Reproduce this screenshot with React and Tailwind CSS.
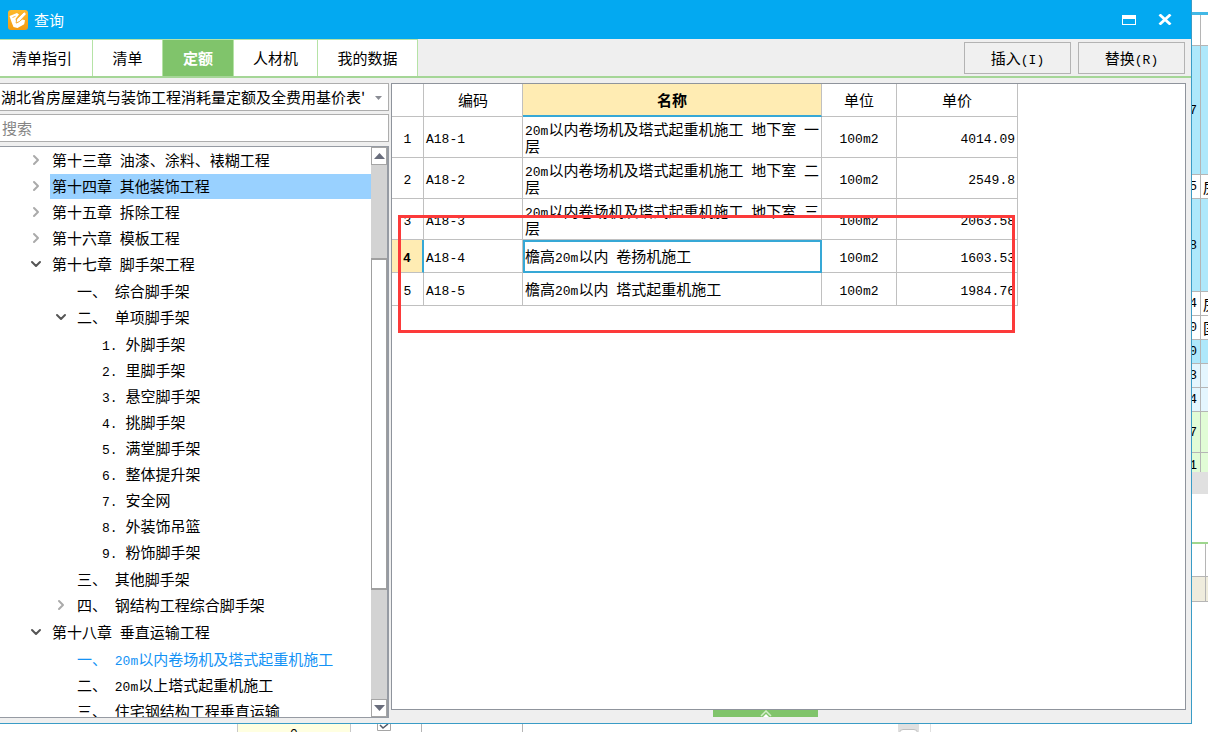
import React, { useState } from "react";
import { ChevronDown, ChevronRight } from "lucide-react";
import clsx from "clsx";

const TABS = [
  { label: "清单指引", width: "w-[93px] pr-2" },
  { label: "清单", width: "w-[70px]" },
  { label: "定额", width: "w-[71px]" },
  { label: "人材机", width: "w-[84px]" },
  { label: "我的数据", width: "w-[100px]" },
];

const TREE = [
  { label: "第十三章 油漆、涂料、裱糊工程", state: "closed" },
  { label: "第十四章 其他装饰工程", state: "closed", selected: true },
  { label: "第十五章 拆除工程", state: "closed" },
  { label: "第十六章 模板工程", state: "closed" },
  {
    label: "第十七章 脚手架工程",
    state: "open",
    children: [
      { label: "一、 综合脚手架" },
      {
        label: "二、 单项脚手架",
        state: "open",
        children: [
          { label: "1. 外脚手架" },
          { label: "2. 里脚手架" },
          { label: "3. 悬空脚手架" },
          { label: "4. 挑脚手架" },
          { label: "5. 满堂脚手架" },
          { label: "6. 整体提升架" },
          { label: "7. 安全网" },
          { label: "8. 外装饰吊篮" },
          { label: "9. 粉饰脚手架" },
        ],
      },
      { label: "三、 其他脚手架" },
      { label: "四、 钢结构工程综合脚手架", state: "closed" },
    ],
  },
  {
    label: "第十八章 垂直运输工程",
    state: "open",
    children: [
      { label: "一、 20m以内卷场机及塔式起重机施工", current: true },
      { label: "二、 20m以上塔式起重机施工" },
      { label: "三、 住宅钢结构工程垂直运输" },
    ],
  },
];

const ROWS = [
  { code: "A18-1", name: "20m以内卷场机及塔式起重机施工 地下室 一层", unit: "100m2", price: "4014.09", tall: true },
  { code: "A18-2", name: "20m以内卷场机及塔式起重机施工 地下室 二层", unit: "100m2", price: "2549.8", tall: true },
  { code: "A18-3", name: "20m以内卷场机及塔式起重机施工 地下室 三层", unit: "100m2", price: "2063.58", tall: true },
  { code: "A18-4", name: "檐高20m以内 卷扬机施工", unit: "100m2", price: "1603.53" },
  { code: "A18-5", name: "檐高20m以内 塔式起重机施工", unit: "100m2", price: "1984.76" },
];

// Sheet of the main program, seen to the right of the dialog
const SHEET_ROWS = [
  { height: "h-[31px]", color: "bg-white" },
  { height: "h-[129px]", color: "bg-[#aee8fb]", num: "7" },
  { height: "h-6", color: "bg-white", num: "5", text: "房" },
  { height: "h-[93px]", color: "bg-[#aee8fb]", num: "8" },
  { height: "h-6", color: "bg-white", num: "4", text: "房" },
  { height: "h-6", color: "bg-white", num: "0", text: "国" },
  { height: "h-6", color: "bg-[#aee8fb]", num: "0" },
  { height: "h-6", color: "bg-[#e4f6fe]", num: "3" },
  { height: "h-6", color: "bg-[#e4f6fe]", num: "4" },
  { height: "h-[41px]", color: "bg-[#e1fcd6]", num: "7" },
];

// Latin runs are set in a half-width face beside the full-width characters
const Txt = ({ children }) =>
  children.split(/([\x20-\x7e]+)/).map((part, i) =>
    i % 2 ? (
      <span key={i} className="font-['Liberation_Mono',monospace] text-[13px] leading-none">
        {part}
      </span>
    ) : (
      part
    )
  );

const AppIcon = () => (
  <svg viewBox="0 0 20 20" className="h-5 w-5" aria-hidden="true">
    <defs>
      <linearGradient id="badge" x1="0" y1="0" x2="0" y2="1">
        <stop offset="0" stopColor="#fdb92c" />
        <stop offset="1" stopColor="#f39a12" />
      </linearGradient>
    </defs>
    <rect width="20" height="20" rx="3" fill="url(#badge)" />
    <path d="M1.500 6 9 3l2 1.500L7.500 9l1 4.500 6-4 2.500.8-.8 4L9.500 18 5.500 17 3.500 12Z" fill="#fff" />
    <path d="m8 13 .8-4L16.200 1.800l2.300 2.200-7 7.500Z" fill="#fff" stroke="#f7a51e" strokeWidth=".8" />
    <path d="m4.500 7.500 3-1.200" stroke="#f9b23a" strokeWidth=".9" />
  </svg>
);

const TreeNode = ({ node }) => {
  const [open, setOpen] = useState(node.state === "open");
  const Arrow = open ? ChevronDown : ChevronRight;

  return (
    <li>
      <div className="flex h-[26px] items-center">
        <div className="flex w-[50px] shrink-0 justify-end pr-[6px]">
          {node.state && (
            <button
              aria-label={open ? "收起" : "展开"}
              onClick={() => setOpen(!open)}
              className={open ? "text-[#555]" : "text-[#aaa]"}
            >
              <Arrow className="h-4 w-4" strokeWidth={3} />
            </button>
          )}
        </div>
        <span
          className={clsx(
            "h-[25px] flex-1 whitespace-nowrap pl-[2px] leading-6",
            node.selected && "bg-[#99d1ff]",
            node.current && "text-[#1492f5]"
          )}
        >
          <Txt>{node.label}</Txt>
        </span>
      </div>
      {open && node.children && (
        <ul className="py-px pl-[25px]">
          {node.children.map((child) => (
            <TreeNode key={child.label} node={child} />
          ))}
        </ul>
      )}
    </li>
  );
};

const ScrollBar = () => (
  <div className="flex w-4 shrink-0 flex-col bg-[#d3d3d3]">
    <button aria-label="向上" className="flex h-[18px] items-center justify-center border border-[#a5a5a5] bg-white">
      <svg viewBox="0 0 11 6" className="h-[6px] w-[11px]">
        <path d="M0 6 5.500 0 11 6Z" fill="#696d7c" />
      </svg>
    </button>
    <div className="grow-[94]" />
    <div className="grow-[331] border border-b-2 border-t-2 border-[#a0a0a0] bg-white" />
    <div className="grow-[110]" />
    <button aria-label="向下" className="flex h-[18px] items-center justify-center border border-[#a5a5a5] bg-white">
      <svg viewBox="0 0 11 6" className="h-[6px] w-[11px]">
        <path d="M0 0 5.500 6 11 0Z" fill="#696d7c" />
      </svg>
    </button>
  </div>
);

const Sidebar = () => (
  <aside className="flex w-[389px] shrink-0 flex-col">
    <div className="relative h-7 border border-l-0 border-[#adadad] bg-white">
      <select
        aria-label="定额库"
        className="h-full w-[367px] appearance-none overflow-hidden whitespace-nowrap bg-transparent pl-px outline-none"
      >
        <option>湖北省房屋建筑与装饰工程消耗量定额及全费用基价表'</option>
      </select>
      <svg viewBox="0 0 7 4" className="pointer-events-none absolute right-[6px] top-3 h-1 w-[7px]">
        <path d="M0 0h7L3.500 4Z" fill="#8a8c94" />
      </svg>
    </div>
    <input
      aria-label="搜索"
      placeholder="搜索"
      className="mt-[3px] h-7 border border-l-0 border-[#adadad] bg-white pb-[2px] pl-[2px] outline-none placeholder:text-[#858585]"
    />
    <div className="mt-1 flex min-h-0 flex-1 border border-l-0 border-r-2 border-[#969ba3] bg-white">
      <ul className="min-w-0 flex-1 overflow-hidden">
        {TREE.map((node) => (
          <TreeNode key={node.label} node={node} />
        ))}
      </ul>
      <ScrollBar />
    </div>
  </aside>
);

const QuotaTable = () => {
  const [active, setActive] = useState(3);

  return (
    <table className="w-[626px] table-fixed border-separate border-spacing-0 leading-4 [&_td]:border-b [&_td]:border-r [&_td]:border-[#c0c0c0] [&_th]:border-b [&_th]:border-r [&_th]:border-[#c0c0c0]">
      <thead>
        <tr className="h-[33px]">
          <th className="w-8" aria-label="序号" />
          <th className="w-[99px] p-0 font-normal">编码</th>
          <th className="w-[299px] !border-b-2 !border-b-[#36a8d6] bg-[#ffecb3] p-0 font-bold">名称</th>
          <th className="w-[75px] p-0 font-normal">单位</th>
          <th className="w-[121px] p-0 font-normal">单价</th>
        </tr>
      </thead>
      <tbody>
        {ROWS.map((row, i) => (
          <tr key={row.code} onClick={() => setActive(i)} className={row.tall ? "h-[41px]" : "h-[33px]"}>
            <td
              className={clsx(
                "p-0 text-center",
                active === i && "!border-r-2 !border-r-[#36a8d6] bg-[#ffecb3] font-bold"
              )}
            >
              <Txt>{String(i + 1)}</Txt>
            </td>
            <td className="p-0 pl-[2px]">
              <Txt>{row.code}</Txt>
            </td>
            <td className={clsx("p-0 pl-[2px]", active === i && "outline-2 -outline-offset-2 outline-[#36a8d6]")}>
              <Txt>{row.name}</Txt>
            </td>
            <td className="p-0 text-center">
              <Txt>{row.unit}</Txt>
            </td>
            <td className="p-0 pr-[2px] text-right">
              <Txt>{row.price}</Txt>
            </td>
          </tr>
        ))}
      </tbody>
    </table>
  );
};

const QueryDialog = () => {
  const [tab, setTab] = useState("定额");

  return (
    <section className="flex min-w-0 flex-1 flex-col border-b border-r border-[#3a9cc6] bg-[#efefef]">
      <header className="flex h-[39px] shrink-0 items-center bg-[#03a9f1] pl-2 text-white">
        <AppIcon />
        <h1 className="ml-[6px] flex-1">查询</h1>
        <button aria-label="最大化" className="flex h-8 w-9 items-center justify-center">
          <svg viewBox="0 0 14 10" className="h-[10px] w-[14px]">
            <path d="M0 0h14v10H0ZM1 4v5h12V4Z" fill="#fff" fillRule="evenodd" />
          </svg>
        </button>
        <button aria-label="关闭" className="mr-2 flex h-8 w-9 items-center justify-center">
          <svg viewBox="0 0 14 11" className="h-[11px] w-[14px]">
            <path d="m1.500.500 11 10m0-10-11 10" stroke="#fff" strokeWidth="2.800" />
          </svg>
        </button>
      </header>

      <div className="flex h-[39px] shrink-0 border-b-2 border-[#a5d697]">
        <nav className="flex border-t border-[#b5e3a6]">
          {TABS.map(({ label, width }) => (
            <button
              key={label}
              onClick={() => setTab(label)}
              className={clsx(
                "border-r border-[#b5e3a6]",
                width,
                tab === label ? "bg-[#80c46b] font-bold text-white" : "bg-white"
              )}
            >
              {label}
            </button>
          ))}
        </nav>
        <div className="ml-auto flex gap-[7px] pb-[2px] pr-[6px] pt-[3px]">
          <button className="w-[107px] border border-[#b3b3b3] bg-[#f0f0f0]">
            <Txt>插入(I)</Txt>
          </button>
          <button className="w-[107px] border border-[#b3b3b3] bg-[#f0f0f0]">
            <Txt>替换(R)</Txt>
          </button>
        </div>
      </div>

      <div className="flex min-h-0 flex-1 gap-[2px] pb-[5px] pr-[5px] pt-[5px]">
        <Sidebar />
        <main className="flex min-w-0 flex-1 flex-col">
          <div className="min-h-0 flex-1 border border-[#8f949c] bg-white">
            <div className="relative w-fit">
              <QuotaTable />
              <div className="pointer-events-none absolute left-[6px] top-[131px] h-[118px] w-[617px] border-[3px] border-[#fc3a3a]" />
            </div>
          </div>
          <button
            aria-label="展开面板"
            className="ml-[322px] mb-px flex h-[7px] w-[105px] shrink-0 justify-center bg-[#80c46b]"
          >
            <svg viewBox="0 0 12 7" className="h-[7px] w-3">
              <path d="m1 6 5-5 5 5" fill="none" stroke="#d3edc9" strokeWidth="1.500" />
              <path d="m3 7 3-3 3 3Z" fill="#fff" />
            </svg>
          </button>
        </main>
      </div>
    </section>
  );
};

const SheetEdge = () => (
  <div className="w-4 shrink-0 overflow-hidden bg-white">
    <div className="h-[15px] border-b-[3px] border-[#42b8e6]" />
    {SHEET_ROWS.map((row, i) => (
      <div key={i} className={clsx("flex items-center border-b border-[#b5b5b5]", row.height, row.color)}>
        <div className="flex h-full w-[9px] shrink-0 items-center justify-end overflow-hidden border-r border-[#b5b5b5] pr-[3px]">
          <Txt>{row.num || ""}</Txt>
        </div>
        <span className="pl-[2px]">{row.text}</span>
      </div>
    ))}
    <div className="flex h-[19px] bg-[#e1fcd6]">
      <div className="flex w-[9px] items-end justify-end overflow-hidden border-r border-[#b5b5b5] pr-[3px]">
        <Txt>1</Txt>
      </div>
    </div>
    <div className="h-[22px] bg-[#e0e0e0]" />
    <div className="h-[50px] border-b-2 border-[#9ed68e]" />
    <div className="h-8 w-[14px] border-r border-[#b5b5b5]" />
    <div className="h-[26px] border-y border-[#b5b5b5] bg-[#efecdd]">
      <div className="h-full w-[14px] border-r border-[#b5b5b5]" />
    </div>
  </div>
);

const SheetBottom = () => (
  <div className="flex h-2 shrink-0 overflow-hidden bg-white">
    <div className="w-[237px]" />
    <div className="w-[114px] border-x border-[#c8c8c8] bg-[#ffffe1] text-center leading-4">
      <Txt>0</Txt>
    </div>
    <div className="w-[26px]" />
    <svg viewBox="0 0 14 8" className="h-2 w-[14px]">
      <path d="M.500 0v6.500h13V0" fill="none" stroke="#a5a5a5" />
      <path d="m3 1 3 3 5-4" fill="none" stroke="#555a66" strokeWidth="1.500" />
    </svg>
    <div className="w-[31px] border-r border-[#b5b5b5]" />
    <div className="w-[101px] border-r border-[#b5b5b5]" />
    <div className="w-[375px]" />
    <div className="w-[21px] bg-[#e0e0e0] px-px pt-[5px]">
      <div className="h-2 rounded-t-sm border border-[#c0c0c0] bg-white" />
    </div>
    <div className="w-3 border-r border-[#e0e0e0]" />
  </div>
);

const App = () => (
  <div className="flex h-screen flex-col overflow-hidden bg-white font-['Noto_Sans_CJK_SC',sans-serif] text-[15px] leading-5 text-black">
    <div className="flex min-h-0 flex-1">
      <QueryDialog />
      <SheetEdge />
    </div>
    <SheetBottom />
  </div>
);

export default App;
